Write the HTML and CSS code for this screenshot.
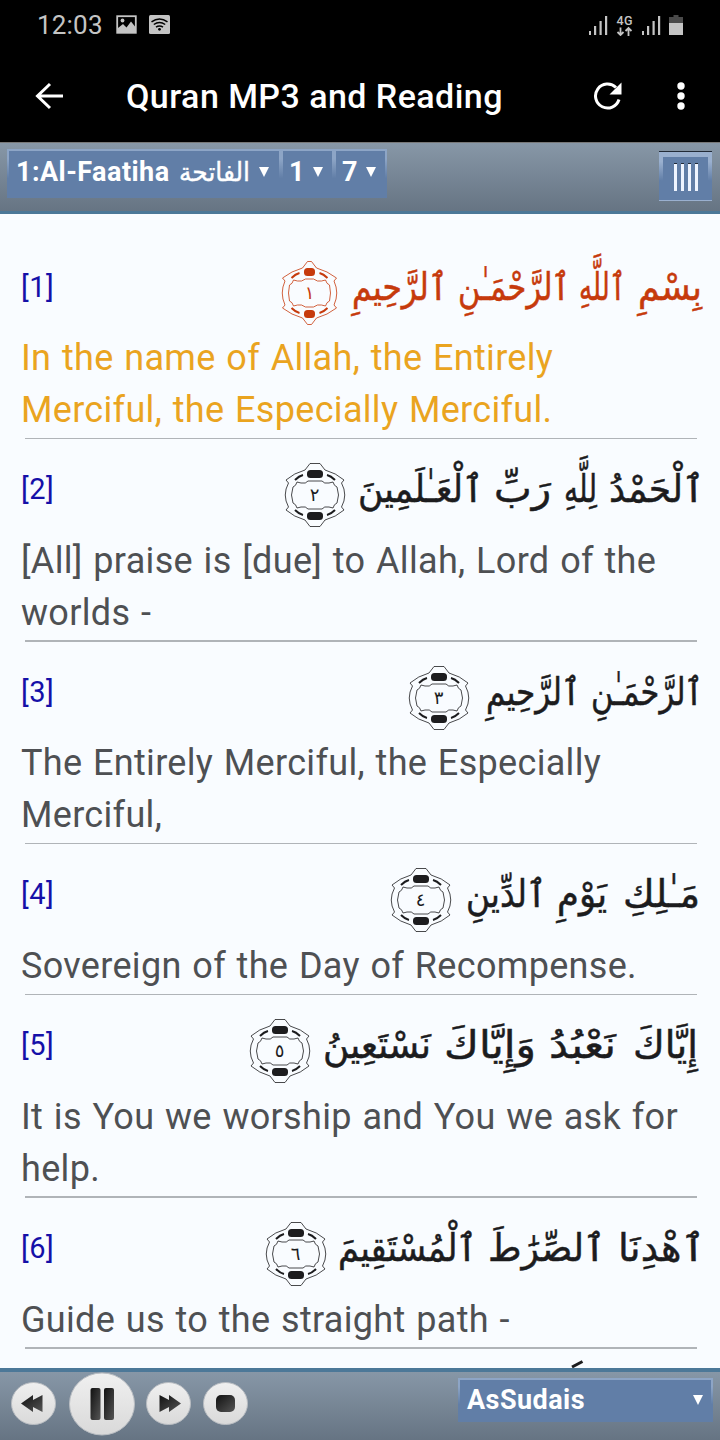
FILE: index.html
```
<!DOCTYPE html>
<html lang="en">
<head>
    <meta charset="UTF-8">
    <meta name="viewport" content="width=device-width, initial-scale=1.0">
    <title>Quran MP3 and Reading</title>
    <link rel="stylesheet" href="styles.css">
</head>
<body>
    <!-- Status bar -->
    <div class="status-bar">
        <span class="clock">12:03</span>
        <svg class="status-left" width="56" height="20" viewBox="0 0 56 20">
            <rect x="1.2" y="1.2" width="18.6" height="16.6" fill="none" stroke="#c4c4c4" stroke-width="1.8"/>
            <path d="M2 17V13l5-4 3.500 3.500 4.500-6 4 5v5.500z" fill="#c4c4c4"/>
            <circle cx="6.500" cy="5.500" r="1.900" fill="#c4c4c4"/>
            <rect x="33" y="0" width="21" height="19" rx="1.500" fill="#c4c4c4"/>
            <g fill="none" stroke="#000" stroke-width="1.500">
                <path d="M35.500 6.800q8-5.800 16 0M37.800 9.500q5.700-4.200 11.400 0M40 12.200q3.500-2.600 7 0"/>
            </g>
            <circle cx="43.500" cy="14.300" r="1.400"/>
        </svg>
        <svg class="status-right" width="96" height="22" viewBox="588 14 96 22">
            <g id="signal" fill="#c4c4c4">
                <rect x="589" y="31" width="2" height="4"/>
                <rect x="594" y="26" width="2.200" height="9"/>
                <rect x="599.500" y="21" width="2.200" height="14"/>
                <rect x="605" y="16" width="2.200" height="19"/>
            </g>
            <use href="#signal" x="53"/>
            <text class="net" x="616.500" y="24.800" textLength="16">4G</text>
            <path d="M620.500 27.500v7.500M617.500 32l3 3 3-3M628.500 36v-7.500M625.500 31l3-3 3 3" fill="none" stroke="#c4c4c4" stroke-width="1.800"/>
            <path d="M673.500 15h5v2h4.500v6h-14v-6h4.500z" fill="#4a4a4a"/>
            <rect x="669" y="23" width="14" height="12" fill="#c4c4c4"/>
        </svg>
    </div>

    <!-- App bar -->
    <header class="app-bar">
        <svg class="back" width="30" height="28" viewBox="0 0 30 28">
            <path d="M29 14H3M16 2L3.500 14 16 26" fill="none" stroke="#fff" stroke-width="3"/>
        </svg>
        <h1>Quran MP3 and Reading</h1>
        <svg class="reload" width="30" height="28" viewBox="0 0 30 28">
            <path d="M26 17.500A12 12 0 1 1 23 5.500" fill="none" stroke="#fff" stroke-width="3"/>
            <path d="M28.500 .5v12H16.500z" fill="#fff"/>
        </svg>
        <svg class="more" width="10" height="28" viewBox="0 0 10 28">
            <circle cx="5" cy="4" r="3.700"/>
            <circle cx="5" cy="14" r="3.700"/>
            <circle cx="5" cy="24" r="3.700"/>
        </svg>
    </header>

    <!-- Sura / verse selection -->
    <nav class="toolbar">
        <button class="select sura">1:Al-Faatiha <svg width="73" height="40" viewBox="0 0 73 40"><text class="sura-ar" x="73" y="29" textLength="71" lengthAdjust="spacingAndGlyphs">الفاتحة</text></svg><i class="arrow"></i></button>
        <button class="select from">1<i class="arrow"></i></button>
        <button class="select to">7<i class="arrow"></i></button>
        <button class="lines"><i></i><i></i><i></i><i></i></button>
    </nav>

    <main class="verses">
        <svg width="0" height="0" class="defs">
            <symbol id="rosette" viewBox="-32 -34 64 68" overflow="visible">
                <g class="ring">
                    <path d="M-5-31.500H5L10-25Q21-22 29-15L26.500-12Q33 0 26.500 12L29 15Q21 22 10 25L5 31.500H-5L-10 25Q-21 22-29 15L-26.500 12Q-33 0-26.500-12L-29-15Q-21-22-10-25z"/>
                    <path d="M-14-12Q-9-11-7-14H7Q9-11 14-12L18-13Q19-9 22-8Q25 0 22 8Q19 9 18 13L14 12Q9 11 7 14H-7Q-9 11-14 12L-18 13Q-19 9-22 8Q-25 0-22-8Q-19-9-18-13z"/>
                </g>
                <g class="dash">
                    <path d="M-20-15Q-16-19-12-20M20-15Q16-19 12-20M-20 15Q-16 19-12 20M20 15Q16 19 12 20"/>
                </g>
                <rect class="gem" x="-8" y="-25" width="16" height="8" rx="3.500"/>
                <rect class="gem" x="-8" y="17" width="16" height="8" rx="3.500"/>
            </symbol>
            <!-- narrower one for the first verse -->
            <symbol id="rosette-small" viewBox="-32 -34 64 68" overflow="visible">
                <g class="ring">
                    <path d="M-2-31.500H2L7-25Q18-22 27-15L24.500-12Q30 0 24.500 12L27 15Q18 22 7 25L2 31.500H-2L-7 25Q-18 22-27 15L-24.500 12Q-30 0-24.500-12L-27-15Q-18-22-7-25z"/>
                    <path d="M-12-12Q-8-11-4-14H4Q8-11 12-12L16-13Q17-9 20-8Q22 0 20 8Q17 9 16 13L12 12Q8 11 4 14H-4Q-8 11-12 12L-16 13Q-17 9-20 8Q-22 0-20-8Q-17-9-16-13z"/>
                </g>
                <g class="dash">
                    <path d="M-18-15Q-14-19-10-20M18-15Q14-19 10-20M-18 15Q-14 19-10 20M18 15Q14 19 10 20"/>
                </g>
                <rect class="gem" x="-5.500" y="-25" width="11" height="8" rx="3.500"/>
                <rect class="gem" x="-5.500" y="17" width="11" height="8" rx="3.500"/>
            </symbol>
        </svg>

        <article class="verse active">
            <div class="head">
                <span class="num">[1]</span>
                <svg class="arabic" width="480" height="97" viewBox="240 0 480 97">
                    <text x="702" y="62" textLength="64" lengthAdjust="spacingAndGlyphs">بِسْمِ</text>
                    <text x="625" y="62" textLength="46" lengthAdjust="spacingAndGlyphs">ٱللَّهِ</text>
                    <text x="570" y="62" textLength="112" lengthAdjust="spacingAndGlyphs">ٱلرَّحْمَـٰنِ</text>
                    <text x="447" y="62" textLength="95" lengthAdjust="spacingAndGlyphs">ٱلرَّحِيمِ</text>
                    <use href="#rosette-small" x="277.500" y="21" width="64" height="68"/>
                    <text class="mark" x="309.500" y="61">١</text>
                </svg>
            </div>
            <p>In the name of Allah, the Entirely Merciful, the Especially Merciful.</p>
        </article>

        <article class="verse">
            <div class="head">
                <span class="num">[2]</span>
                <svg class="arabic" width="480" height="97" viewBox="240 0 480 97">
                    <text x="704" y="62" textLength="95" lengthAdjust="spacingAndGlyphs">ٱلْحَمْدُ</text>
                    <text x="597" y="62" textLength="33" lengthAdjust="spacingAndGlyphs">لِلَّهِ</text>
                    <text x="551" y="62" textLength="57" lengthAdjust="spacingAndGlyphs">رَبِّ</text>
                    <text x="483" y="62" textLength="125" lengthAdjust="spacingAndGlyphs">ٱلْعَـٰلَمِينَ</text>
                    <use href="#rosette" x="283" y="21" width="64" height="68"/>
                    <text class="mark" x="314.500" y="61">٢</text>
                </svg>
            </div>
            <p>[All] praise is [due] to Allah, Lord of the worlds -</p>
        </article>

        <article class="verse">
            <div class="head">
                <span class="num">[3]</span>
                <svg class="arabic" width="480" height="97" viewBox="240 0 480 97">
                    <text x="703" y="62" textLength="112" lengthAdjust="spacingAndGlyphs">ٱلرَّحْمَـٰنِ</text>
                    <text x="580" y="62" textLength="94" lengthAdjust="spacingAndGlyphs">ٱلرَّحِيمِ</text>
                    <use href="#rosette" x="407" y="21" width="64" height="68"/>
                    <text class="mark" x="438.500" y="61">٣</text>
                </svg>
            </div>
            <p>The Entirely Merciful, the Especially Merciful,</p>
        </article>

        <article class="verse">
            <div class="head">
                <span class="num">[4]</span>
                <svg class="arabic" width="480" height="97" viewBox="240 0 480 97">
                    <text x="700" y="62" textLength="77" lengthAdjust="spacingAndGlyphs">مَـٰلِكِ</text>
                    <text x="607" y="62" textLength="50" lengthAdjust="spacingAndGlyphs">يَوْمِ</text>
                    <text x="546" y="62" textLength="80" lengthAdjust="spacingAndGlyphs">ٱلدِّينِ</text>
                    <use href="#rosette" x="389" y="21" width="64" height="68"/>
                    <text class="mark" x="420.500" y="61">٤</text>
                </svg>
            </div>
            <p>Sovereign of the Day of Recompense.</p>
        </article>

        <article class="verse">
            <div class="head">
                <span class="num">[5]</span>
                <svg class="arabic" width="480" height="97" viewBox="240 0 480 97">
                    <text x="698" y="62" textLength="65" lengthAdjust="spacingAndGlyphs">إِيَّاكَ</text>
                    <text x="616" y="62" textLength="67" lengthAdjust="spacingAndGlyphs">نَعْبُدُ</text>
                    <text x="536" y="62" textLength="92" lengthAdjust="spacingAndGlyphs">وَإِيَّاكَ</text>
                    <text x="431" y="62" textLength="108" lengthAdjust="spacingAndGlyphs">نَسْتَعِينُ</text>
                    <use href="#rosette" x="248" y="21" width="64" height="68"/>
                    <text class="mark" x="279.500" y="61">٥</text>
                </svg>
            </div>
            <p>It is You we worship and You we ask for help.</p>
        </article>

        <article class="verse">
            <div class="head">
                <span class="num">[6]</span>
                <svg class="arabic" width="480" height="97" viewBox="240 0 480 97">
                    <text x="704" y="62" textLength="86" lengthAdjust="spacingAndGlyphs">ٱهْدِنَا</text>
                    <text x="605" y="62" textLength="117" lengthAdjust="spacingAndGlyphs">ٱلصِّرَٰطَ</text>
                    <text x="477" y="62" textLength="139" lengthAdjust="spacingAndGlyphs">ٱلْمُسْتَقِيمَ</text>
                    <use href="#rosette" x="264" y="21" width="64" height="68"/>
                    <text class="mark" x="295.500" y="61">٦</text>
                </svg>
            </div>
            <p>Guide us to the straight path -</p>
        </article>

        <!-- top of the next verse, cut off by the player -->
        <svg class="next" width="480" height="20" viewBox="240 0 480 20">
            <path d="M572 17l10.500-5.500"/>
        </svg>
    </main>

    <!-- Player -->
    <footer class="player">
        <svg width="260" height="70" viewBox="0 0 260 70">
            <defs>
                <linearGradient id="disc" x1="0" y1="0" x2="0" y2="1">
                    <stop offset="0" stop-color="#f0f0f0"/>
                    <stop offset="1" stop-color="#d9d9d9"/>
                </linearGradient>
                <linearGradient id="ink" x1="0" y1="0" x2="1" y2="1">
                    <stop offset="0" stop-color="#111"/>
                    <stop offset="1" stop-color="#555"/>
                </linearGradient>
            </defs>
            <g fill="url(#disc)" stroke="#b9bdc2">
                <ellipse cx="33.500" cy="31.500" rx="22" ry="21"/>
                <ellipse cx="102" cy="32" rx="32.500" ry="31"/>
                <ellipse cx="168.500" cy="31.500" rx="22" ry="21"/>
                <ellipse cx="225.500" cy="31.500" rx="22" ry="21"/>
            </g>
            <g fill="url(#ink)">
                <path d="M21 31.500l12-8.500v5l9.500-5v17l-9.500-5v5z"/>
                <rect x="90.500" y="16" width="10" height="32" rx="2"/>
                <rect x="104" y="16" width="10" height="32" rx="2"/>
                <path d="M181 31.500l-12-8.500v5l-9.500-5v17l9.500-5v5z"/>
                <rect x="216" y="23" width="19" height="17" rx="5"/>
            </g>
        </svg>
        <button class="select reciter">AsSudais<i class="arrow"></i></button>
    </footer>
</body>
</html>
```
FILE: styles.css
```
body {
    font-family: Roboto, sans-serif;
    margin: 0;
    height: 1440px;
    display: flex;
    flex-direction: column;
    overflow: hidden;
    background-color: #f9fcff;
}
.status-bar {
    display: flex;
    height: 50px;
    padding: 0 36px 0 37px;
    align-items: center;
    background-color: #000;
    color: #c4c4c4;
}
.clock {
    font-size: 26px;
    letter-spacing: 0.2px;
    width: 79px;
}
.status-right {
    margin-left: auto;
}
.net {
    font-size: 12.500px;
    font-weight: 500;
    fill: #c4c4c4;
}
.app-bar {
    display: flex;
    height: 92px;
    padding: 0 34px;
    box-sizing: border-box;
    align-items: center;
    background-color: #000;
    color: #fff;
}
.app-bar h1 {
    margin: 0 0 0 62px;
    font-size: 34px;
    font-weight: 500;
    letter-spacing: 0.45px;
    white-space: nowrap;
}
.reload {
    margin-left: auto;
    margin-right: 53px;
}
.more {
    fill: #fff;
}
.toolbar {
    display: flex;
    align-items: flex-start;
    height: 72px;
    padding: 6px 8px 0 7px;
    box-sizing: border-box;
    background: linear-gradient(#8797a7, #667483);
    border-top: 1px solid #777;
    border-bottom: 3px solid #4c7898;
}
.select {
    display: flex;
    align-items: center;
    height: 49px;
    box-sizing: border-box;
    margin: 0;
    padding: 0 8px 4px 7px;
    border: 2px solid;
    border-image: linear-gradient(#8da5c6 20%, #617ea7 60%) 2;
    background-color: #617ea7;
    color: #fff;
    font: bold 27px Roboto, sans-serif;
    letter-spacing: 0.45px;
    white-space: pre;
}
.arrow {
    margin-left: auto;
    border: 5px solid transparent;
    border-top: 10px solid #fff;
    border-bottom: 0;
}
.sura {
    width: 274px;
    padding-right: 10px;
}
.sura-ar {
    font: 26px "DejaVu Sans", sans-serif;
    letter-spacing: 0;
    fill: #fff;
    stroke: #fff;
    stroke-width: 0.4;
    direction: rtl;
}
.from,
.to {
    width: 53px;
    padding-left: 6px;
    padding-right: 9px;
}
.lines {
    display: flex;
    justify-content: center;
    align-items: center;
    gap: 4px;
    width: 53px;
    height: 48px;
    margin: 3px 0 0 auto;
    padding: 0;
    box-sizing: border-box;
    border: 4px solid;
    border-top-width: 5px;
    border-image: linear-gradient(#9ab0cf 20%, #617ea7 60%) 5 4 4;
    background-color: #617ea7;
    box-shadow: 0 -1px #222b38, 0 1px #9ab0cf;
}
.lines i {
    width: 3px;
    height: 27px;
    background-color: #eef4ff;
    border-top: 1px solid #222b38;
}
.verses {
    flex: 1;
    min-height: 0;
    overflow: hidden;
    padding: 23.700px 0 0;
}
.defs {
    display: block;
}
.verse {
    position: relative;
    padding-bottom: 1px;
    color: #4e5053;
}
.verse::after {
    content: "";
    display: block;
    height: 1.600px;
    margin: 1px 23px 0 25px;
    background-color: #b0b4b8;
}
.head {
    display: flex;
    height: 95.600px;
    padding-left: 21px;
    justify-content: space-between;
}
.num {
    padding-top: 32px;
    font-size: 29px;
    letter-spacing: 0.5px;
    color: #1510a8;
}
.arabic {
    overflow: visible;
    fill: #1c1c1e;
    color: #1c1c1e;
}
.arabic text {
    font: 38px "DejaVu Sans", sans-serif;
    direction: rtl;
    stroke: currentColor;
    stroke-width: 0.5;
}
.arabic .mark {
    font-size: 18px;
    text-anchor: middle;
    stroke: none;
}
.ring {
    fill: none;
    stroke: currentColor;
    stroke-width: 0.8;
}
.active .ring {
    stroke: #7d4a3c;
}
.dash {
    fill: none;
    stroke: currentColor;
    stroke-width: 2;
}
.gem {
    fill: currentColor;
}
.verse p {
    margin: 0;
    padding: 0 20px 0 21px;
    font-size: 36px;
    line-height: 51.700px;
    letter-spacing: 0.32px;
    word-spacing: 1.400px;
}
.active p {
    color: #eaa41f;
}
.active .arabic {
    fill: #c63a0c;
    color: #c63a0c;
}
.next {
    display: block;
    margin-left: auto;
    stroke: #1c1c1e;
    stroke-width: 3;
}
.player {
    display: flex;
    justify-content: space-between;
    align-items: flex-start;
    height: 72px;
    padding-right: 7px;
    box-sizing: border-box;
    border-top: 4px solid #4c7898;
    background: linear-gradient(#8797a7, #667483);
}
.reciter {
    width: 255px;
    height: 44px;
    margin-top: 6px;
    padding: 0 8px 0 7px;
}
```
